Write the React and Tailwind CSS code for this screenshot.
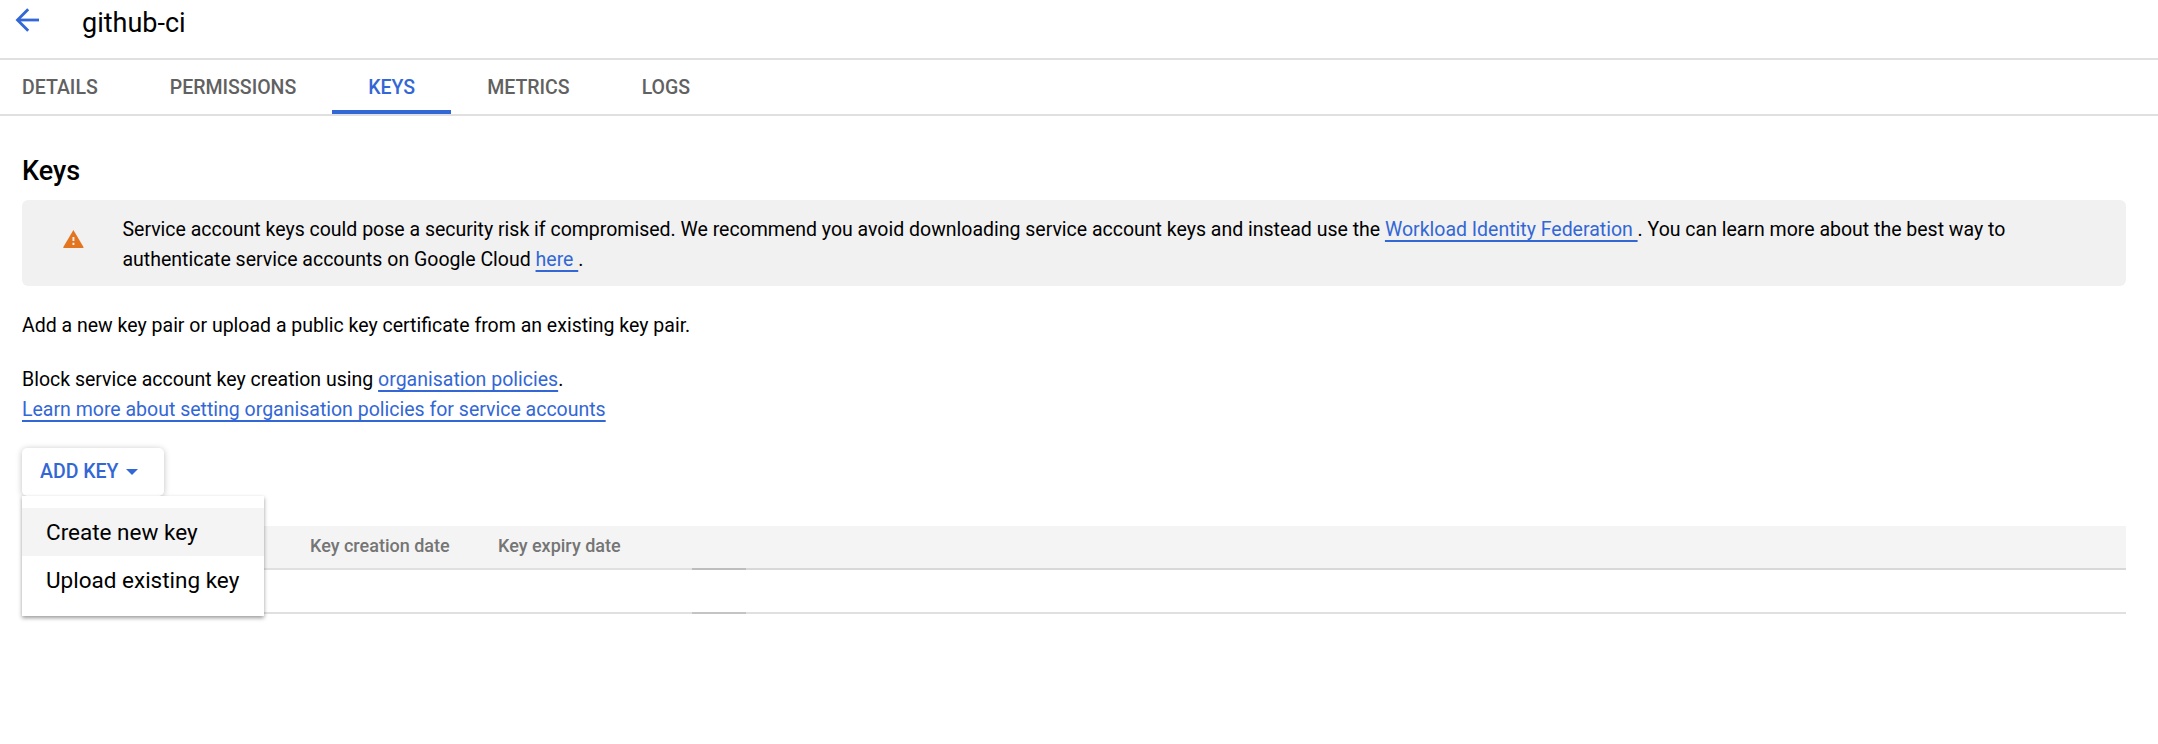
const TABS = ["DETAILS", "PERMISSIONS", "KEYS", "METRICS", "LOGS"];

function BackArrow() {
  return (
    <svg className="h-[26px] w-[26px]" viewBox="0 0 26 26" fill="none" stroke="#3367d6" strokeWidth="2.8">
      <path d="M14.2 2.2 3.5 13l10.7 10.8" />
      <path d="M3.5 13H25" />
    </svg>
  );
}

function WarningIcon() {
  return (
    <svg className="h-[18px] w-[21px]" viewBox="0 0 21 18">
      <path d="M10.4 0 20.6 17.2Q20.6 18 19.9 18H.9Q.2 18 .2 17.2z" fill="#e37420" />
      <path d="M9.5 7h1.9v4H9.5zM9.5 12.8h1.9v2.2H9.5z" fill="#f1f1f1" />
    </svg>
  );
}

function Link({ children }) {
  return (
    <a
      href="#"
      className="whitespace-pre text-[#3367d6] underline decoration-2 underline-offset-4 [text-decoration-skip-ink:none]"
    >
      {children}
    </a>
  );
}

function Tab({ label, active }) {
  return (
    <button
      className={
        active
          ? "flex h-[54px] flex-col border-b-4 border-[#3367d6] px-9 pt-4 text-[#3367d6]"
          : "flex h-[54px] flex-col px-9 pt-4 text-[#616161]"
      }
    >
      <span className="text-[19.5px] leading-[23px] font-medium">{label}</span>
    </button>
  );
}

function AddKeyMenu() {
  return (
    <div className="relative w-fit">
      <button className="flex h-12 w-[142px] items-start rounded-[5px] bg-white pt-3 pl-[18px] text-[#3367d6] shadow-[0_1px_6px_rgba(0,0,0,0.25)]">
        <span className="text-[19.5px] leading-[23px] font-medium">ADD KEY</span>
        <svg className="mt-[9px] ml-[7px] h-[6px] w-3" viewBox="0 0 12 6">
          <path d="M0 0h12L6 6z" fill="#3367d6" />
        </svg>
      </button>
      <div className="absolute top-12 left-0 z-10 h-[120px] w-[242px] bg-white pt-3 text-[22.5px] leading-[26px] whitespace-nowrap shadow-[0_2px_4px_rgba(0,0,0,0.4)]">
        <div className="h-12 bg-[#f4f4f4] pt-[11px] pl-6">Create new key</div>
        <div className="h-12 pt-[11px] pl-6">Upload existing key</div>
      </div>
    </div>
  );
}

function KeysTable() {
  return (
    <div className="mt-[30px] mr-8 grid grid-cols-[288px_188px_194px_54px_1fr] text-[18px] leading-[21px] font-medium text-[#757575]">
      <div className="h-11 border-b-2 border-[#e0e0e0] bg-[#f4f4f4]" />
      <div className="h-11 border-b-2 border-[#e0e0e0] bg-[#f4f4f4] pt-[9px]">Key creation date</div>
      <div className="h-11 border-b-2 border-[#e0e0e0] bg-[#f4f4f4] pt-[9px]">Key expiry date</div>
      <div className="h-11 border-b-2 border-[#bdbdbd] bg-[#f4f4f4]" />
      <div className="h-11 border-b-2 border-[#d8d8d8] bg-[#f4f4f4]" />
      <div className="col-span-3 h-11 border-b-2 border-[#e0e0e0]" />
      <div className="h-11 border-b-2 border-[#c4c4c4]" />
      <div className="h-11 border-b-2 border-[#e0e0e0]" />
    </div>
  );
}

export default function App() {
  return (
    <div className="h-[744px] w-[2158px] overflow-hidden bg-white font-['Roboto',sans-serif] text-black">
      <header className="flex h-[60px] items-start border-b-2 border-[#e0e0e0] pt-[7px] pl-[14px]">
        <BackArrow />
        <h1 className="ml-[42px] text-[27px] leading-8">github-ci</h1>
      </header>
      <nav className="flex h-14 border-b-2 border-[#e0e0e0]">
        <div className="-ml-3.5 flex">
          {TABS.map((label) => (
            <Tab key={label} label={label} active={label === "KEYS"} />
          ))}
        </div>
      </nav>
      <main className="pt-[39px] pl-[22px] text-[19.5px] leading-[30px]">
        <h2 className="text-[27px] leading-8 font-medium">Keys</h2>
        <div className="mt-[13px] mr-8 flex h-[86px] rounded-[6px] bg-[#f1f1f1] pt-[15px]">
          <div className="w-[100.5px] shrink-0 pt-[15px] pl-[41px]">
            <WarningIcon />
          </div>
          <p className="whitespace-nowrap">
            <span className="tracking-[-0.006px]">
              Service account keys could pose a security risk if compromised. We recommend you avoid downloading service
              account keys and instead use the <Link>Workload Identity Federation </Link>. You can learn more about the
              best way to
            </span>
            <br />
            authenticate service accounts on Google Cloud <Link>here </Link>.
          </p>
        </div>
        <p className="mt-[25px]">Add a new key pair or upload a public key certificate from an existing key pair.</p>
        <p className="mt-6 mb-[23px]">
          Block service account key creation using <Link>organisation policies</Link>.
          <br />
          <Link>Learn more about setting organisation policies for service accounts</Link>
        </p>
        <AddKeyMenu />
        <KeysTable />
      </main>
    </div>
  );
}
